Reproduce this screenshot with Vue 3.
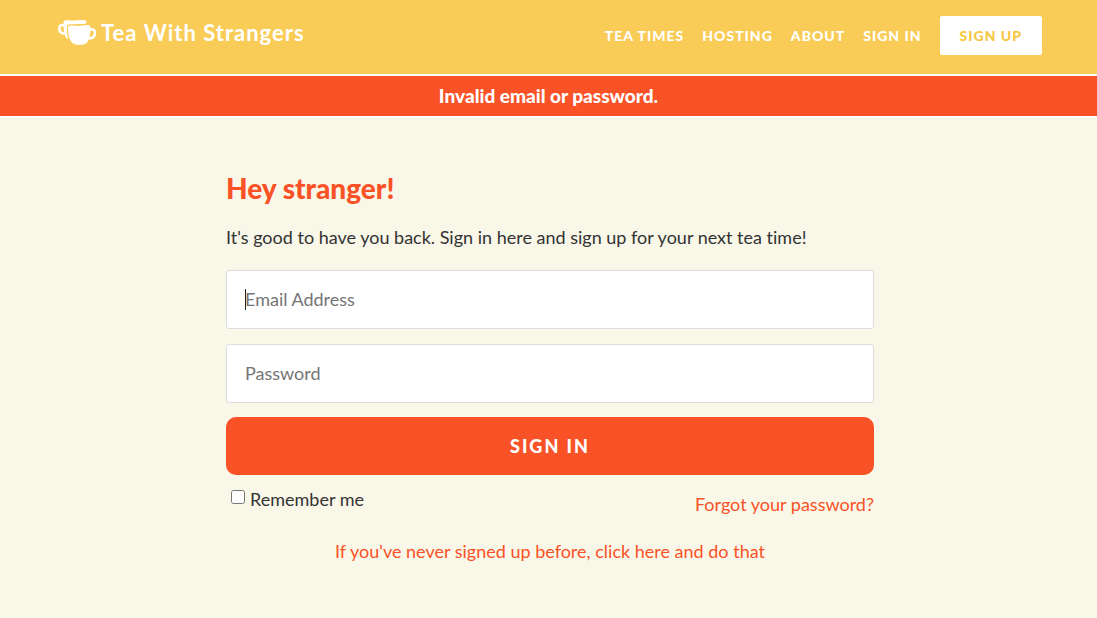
<script setup>
import { ref, onMounted } from 'vue'

const links = ['Tea Times', 'Hosting', 'About', 'Sign In']
const email = ref('')
const password = ref('')
const remember = ref(false)
const emailFocused = ref(false)
const emailInput = ref(null)

onMounted(() => {
  emailInput.value.focus()
  emailFocused.value = true
})
</script>

<template>
  <div class="page">
    <header class="header">
      <a class="brand" href="#" aria-label="Tea With Strangers">
        <svg class="cups" width="40" height="28" viewBox="0 0 40 28" aria-hidden="true">
          <path class="handle" d="M7.500 6.500C4.500 5.200 2.300 6.500 2.300 9.600C2.400 13 4.500 14.800 8.500 14.500" />
          <path class="fill" d="M6.500 3C6.500 1 9 1 13 1.500C18 2 23 .8 27 1C29.500 1.200 29.500 2.500 29.300 4.600C24 5.300 17 5.300 12.500 5.300C10.300 5.500 9.700 7 9.900 10C10 14 10.300 18 11.500 20.500C8.500 19 7 15 6.800 11Z" />
          <path class="fill" d="M11 9C10.800 6.500 13 6.500 17 6.700C22 6.900 26 6.300 30 6C33 5.800 33.700 6.800 33.600 9.500C33.600 15 32.500 20.500 29.800 23.800C27.500 26.600 18.500 26.600 15.500 24C12 21 11.200 15 11 9Z" />
          <path class="handle" d="M33 10.700C36.300 9.700 38 11 38 13.800C38 17.500 35.500 19.600 32 19.300" />
        </svg>
        <span class="brand-name">Tea With Strangers</span>
      </a>
      <nav class="nav">
        <a v-for="link in links" :key="link" href="#">{{ link }}</a>
        <a class="signup" href="#">Sign Up</a>
      </nav>
    </header>

    <div class="alert" role="alert">Invalid email or password.</div>

    <main class="main">
      <form class="form" @submit.prevent>
        <h1>Hey stranger!</h1>
        <p>It's good to have you back. Sign in here and sign up for your next tea time!</p>
        <div class="email">
          <input
            ref="emailInput"
            v-model="email"
            class="field"
            :class="{ empty: !email }"
            type="email"
            placeholder="Email Address"
            aria-label="Email Address"
            @focus="emailFocused = true"
            @blur="emailFocused = false"
          >
          <span v-if="emailFocused && !email" class="caret" aria-hidden="true"></span>
        </div>
        <input v-model="password" class="field" type="password" placeholder="Password" aria-label="Password">
        <button class="submit" type="submit">Sign In</button>
        <div class="options">
          <label class="remember" for="remember">
            <input id="remember" v-model="remember" type="checkbox">
            <span>Remember me</span>
          </label>
          <a class="forgot" href="#">Forgot your password?</a>
        </div>
        <a class="join" href="#">If you've never signed up before, click here and do that</a>
      </form>
    </main>
  </div>
</template>

<style>
body {
  margin: 0;
  background: #f9f7e8;
}
</style>

<style scoped>
.page {
  min-height: 100vh;
  font-family: Lato, "Open Sans", sans-serif;
  font-size: 18px;
  font-variant-ligatures: none;
  line-height: 24px;
  color: #333;
  background: #f9f7e8;
}
a {
  color: #f95227;
  text-decoration: none;
}
.header {
  display: flex;
  align-items: center;
  justify-content: space-between;
  box-sizing: border-box;
  min-height: 76px;
  padding: 14px 55px 17px;
  background: #f9cc58;
  border-bottom: 2px solid #fff;
}
.brand {
  display: flex;
  align-items: center;
  gap: 4px;
  margin-bottom: 6px;
  padding-left: 2px;
  color: #fff;
}
.cups .fill {
  fill: #fff;
}
.cups .handle {
  fill: none;
  stroke: #fff;
  stroke-width: 2.6;
}
.brand-name {
  font-size: 22px;
  font-weight: 700;
  letter-spacing: 1px;
}
.nav {
  display: flex;
  align-items: center;
  gap: 18px;
  font-size: 14px;
  font-weight: 900;
  letter-spacing: 1px;
  text-transform: uppercase;
}
.nav a {
  color: #fff;
}
.nav .signup {
  padding: 8px 20px 7px;
  color: #f5c63f;
  background: #fff;
  border-radius: 2px;
}
.alert {
  padding: 8px;
  font-size: 19px;
  font-weight: 900;
  text-align: center;
  color: #fff;
  background: #f95227;
  border-bottom: 2px solid #fff;
}
.main {
  padding: 53px 20px 40px 23px;
}
.form {
  display: flex;
  flex-direction: column;
  max-width: 648px;
  margin: 0 auto;
}
h1 {
  margin: 0 0 20px;
  font-size: 28px;
  line-height: 34px;
  font-weight: 900;
  color: #f95227;
}
p {
  margin: 0 0 21px;
}
.email {
  display: flex;
  align-items: center;
  position: relative;
  margin-bottom: 15px;
}
.field {
  box-sizing: border-box;
  width: 100%;
  height: 59px;
  margin: 0;
  padding: 0 18px 2px;
  font: inherit;
  color: #333;
  background: #fff;
  border: 1px solid #ddd;
  border-radius: 3px;
  outline: none;
}
.field.empty {
  caret-color: transparent;
}
.caret {
  position: absolute;
  left: 19px;
  width: 1px;
  height: 21px;
  background: #222;
}
.field::placeholder {
  color: #757575;
}
.submit {
  height: 58px;
  margin: 14px 0 0;
  border: 0;
  border-radius: 10px;
  font: inherit;
  font-weight: 900;
  letter-spacing: 2px;
  text-transform: uppercase;
  color: #fff;
  background: #f95227;
}
.options {
  display: flex;
  justify-content: space-between;
  padding-top: 12px;
}
.remember {
  display: flex;
  gap: 5px;
}
.remember input {
  width: 14px;
  height: 14px;
  margin: 3px 0 0 5px;
}
.forgot {
  margin-top: 5px;
}
.join {
  align-self: center;
  margin-top: 23px;
}
</style>
